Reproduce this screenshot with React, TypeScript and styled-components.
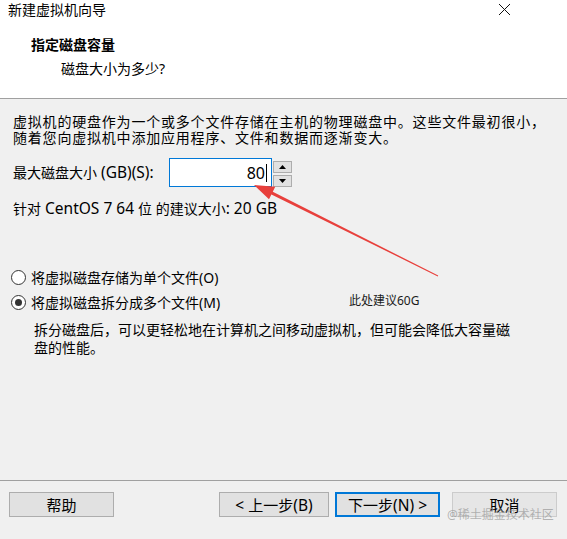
import React from "react";
import styled, { createGlobalStyle, css } from "styled-components";

const Global = createGlobalStyle`
  html, body { margin: 0; padding: 0; background: #f0f0f0; }
  body {
    font-family: "Segoe UI", "Noto Sans", "Noto Sans CJK SC", sans-serif;
    font-size: 14px;
    color: #000;
  }
`;

const Window = styled.div`
  position: relative;
  width: 567px;
  height: 539px;
  display: flex;
  flex-direction: column;
  background: #f0f0f0;
  overflow: hidden;
`;

const Header = styled.header`
  height: 98px;
  background: #fff;
  border-bottom: 1px solid #a0a0a0;
  display: flex;
  flex-direction: column;
`;

const TitleBar = styled.div`
  height: 20px;
  display: flex;
  align-items: center;
  justify-content: space-between;
  padding: 0 56px 0 8px;
`;

const TitleText = styled.span`
  font-size: 14px;
  line-height: 20px;
`;

const CloseIcon = styled.svg`
  width: 13px;
  height: 13px;
  margin-top: -1px;
`;

const HeaderTitle = styled.div`
  margin: 15px 0 0 31px;
  font-weight: bold;
  font-size: 14px;
  line-height: 20px;
`;

const HeaderSub = styled.div`
  margin: 4px 0 0 61px;
  font-size: 14px;
  line-height: 20px;
`;

const Content = styled.main`
  flex: 1;
  display: flex;
  flex-direction: column;
  padding: 15px 13px 0 13px;
`;

const Paragraph = styled.p`
  margin: 0;
  font-size: 14px;
  line-height: 16px;
  letter-spacing: 0.8px;
`;

const Latin = styled.span`
  font-size: 15.5px;
`;

const FieldRow = styled.div`
  display: flex;
  align-items: center;
  margin-top: 12px;
`;

const Label = styled.label`
  width: 156px;
  line-height: 20px;
`;

const NumberBox = styled.div`
  width: 97px;
  height: 27px;
  border: 1px solid #0078d7;
  background: #fff;
  display: flex;
  align-items: center;
  justify-content: flex-end;
  padding-right: 4px;
  font-size: 16px;
`;

const Caret = styled.span`
  display: inline-block;
  width: 1px;
  height: 18px;
  background: #000;
  margin-left: 1px;
`;

const Spinner = styled.div`
  margin-left: 1px;
  display: flex;
  flex-direction: column;
  gap: 2px;
  height: 26px;
  margin-top: 3px;
`;

const SpinButton = styled.div`
  width: 17px;
  height: 11px;
  border: 1px solid #adadad;
  background: #e1e1e1;
  display: flex;
  align-items: center;
  justify-content: center;
`;

const Recommend = styled.div`
  margin-top: 12px;
  line-height: 18px;
`;

const RadioGroup = styled.div`
  margin-top: 49px;
  display: flex;
  flex-direction: column;
  gap: 5px;
  margin-left: -2px;
`;

const RadioRow = styled.label`
  display: flex;
  align-items: center;
  height: 20px;
  gap: 5px;
`;

const RadioCircle = styled.span<{ $checked?: boolean }>`
  width: 13px;
  height: 13px;
  border-radius: 50%;
  border: 1px solid #333;
  background: #fff;
  display: flex;
  align-items: center;
  justify-content: center;
  ${(p) =>
    p.$checked &&
    css`
      &::after {
        content: "";
        width: 7px;
        height: 7px;
        border-radius: 50%;
        background: #333;
      }
    `}
`;

const Description = styled.p`
  margin: 9px 0 0 21px;
  line-height: 18px;
  width: 480px;
`;

const Footer = styled.footer`
  height: 47px;
  border-top: 1px solid #a0a0a0;
  display: flex;
  align-items: flex-start;
  padding: 11px 10px 0 9px;
`;

const Button = styled.button<{ $width?: number; $primary?: boolean; $muted?: boolean }>`
  width: ${(p) => p.$width ?? 105}px;
  height: 25px;
  margin: 0;
  padding: 0;
  background: #e1e1e1;
  border: 1px solid #adadad;
  font-family: inherit;
  font-size: 15px;
  color: #000;
  display: flex;
  align-items: center;
  justify-content: center;
  white-space: pre;
  ${(p) =>
    p.$primary &&
    css`
      border: 2px solid #0078d7;
    `}
  ${(p) =>
    p.$muted &&
    css`
      background: #e6e6e6;
      border-color: #cccccc;
    `}
`;

const Spacer = styled.div`
  flex: 1;
`;

const ButtonGroup = styled.div`
  display: flex;
  gap: 6px;
`;

const CancelGap = styled.div`
  width: 12px;
`;

const ArrowLayer = styled.svg`
  position: absolute;
  left: 0;
  top: 0;
  width: 567px;
  height: 539px;
  pointer-events: none;
`;

const Annotation = styled.span`
  position: absolute;
  left: 349px;
  top: 292px;
  font-size: 12px;
  line-height: 18px;
  color: #1a1a1a;
`;

const Watermark = styled.span`
  position: absolute;
  left: 447px;
  top: 506px;
  font-size: 12px;
  line-height: 18px;
  color: rgba(150, 150, 150, 0.7);
  pointer-events: none;
`;

export default function App() {
  return (
    <>
      <Global />
      <Window>
        <Header>
          <TitleBar>
            <TitleText>新建虚拟机向导</TitleText>
            <CloseIcon viewBox="0 0 13 13">
              <path d="M1 1 L12 12 M12 1 L1 12" stroke="#111" strokeWidth="1" fill="none" />
            </CloseIcon>
          </TitleBar>
          <HeaderTitle>指定磁盘容量</HeaderTitle>
          <HeaderSub>磁盘大小为多少?</HeaderSub>
        </Header>
        <Content>
          <Paragraph>
            虚拟机的硬盘作为一个或多个文件存储在主机的物理磁盘中。这些文件最初很小，
            <br />
            随着您向虚拟机中添加应用程序、文件和数据而逐渐变大。
          </Paragraph>
          <FieldRow>
            <Label>
              最大磁盘大小<Latin> (GB)(S):</Latin>
            </Label>
            <NumberBox>
              80
              <Caret />
            </NumberBox>
            <Spinner>
              <SpinButton>
                <svg width="7" height="4" viewBox="0 0 7 4">
                  <path d="M0 4 L3.5 0 L7 4 Z" fill="#000" />
                </svg>
              </SpinButton>
              <SpinButton>
                <svg width="7" height="4" viewBox="0 0 7 4">
                  <path d="M0 0 L3.5 4 L7 0 Z" fill="#000" />
                </svg>
              </SpinButton>
            </Spinner>
          </FieldRow>
          <Recommend>
            针对<Latin> CentOS 7 64 </Latin>位 的建议大小<Latin>: 20 GB</Latin>
          </Recommend>
          <RadioGroup>
            <RadioRow>
              <RadioCircle />
              将虚拟磁盘存储为单个文件(O)
            </RadioRow>
            <RadioRow>
              <RadioCircle $checked />
              将虚拟磁盘拆分成多个文件(M)
            </RadioRow>
          </RadioGroup>
          <Description>
            拆分磁盘后，可以更轻松地在计算机之间移动虚拟机，但可能会降低大容量磁盘的性能。
          </Description>
        </Content>
        <Footer>
          <Button>帮助</Button>
          <Spacer />
          <ButtonGroup>
            <Button $width={110}>
              <Latin>&lt; </Latin>上一步<Latin>(B)</Latin>
            </Button>
            <Button $primary>
              下一步<Latin>(N) &gt;</Latin>
            </Button>
          </ButtonGroup>
          <CancelGap />
          <Button $muted>取消</Button>
        </Footer>
        <ArrowLayer viewBox="0 0 567 539">
          <polygon
            points="254,185 275.2,186.8 272.8,191.7 438.2,275.6 437.8,276.4 271.4,194.4 269,199.3"
            fill="#e8403c"
          />
        </ArrowLayer>
        <Annotation>此处建议60G</Annotation>
        <Watermark>@稀土掘金技术社区</Watermark>
      </Window>
    </>
  );
}
